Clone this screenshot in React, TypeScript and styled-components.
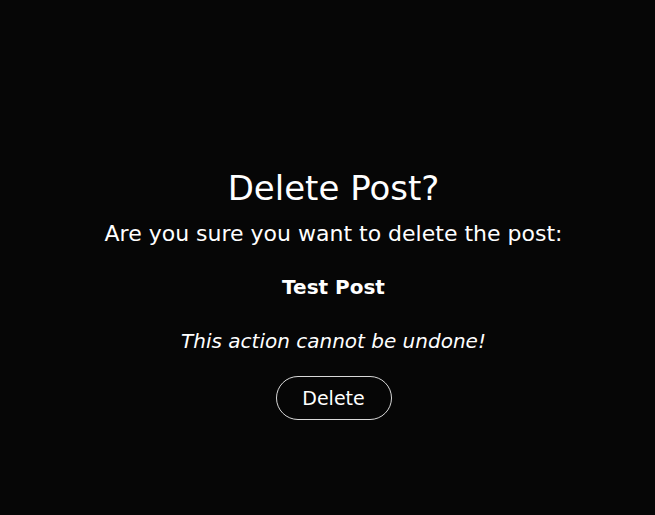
import styled, { createGlobalStyle } from 'styled-components';

const GlobalStyle = createGlobalStyle`
  html, body {
    margin: 0;
    padding: 0;
    background: #060606;
  }
  body {
    font-family: "DejaVu Sans", "Noto Sans", sans-serif;
    color: #ffffff;
  }
`;

const Page = styled.main`
  min-height: 515px;
  display: flex;
  flex-direction: column;
  align-items: center;
  padding: 165px 0 0 12px;
  box-sizing: border-box;
`;

const Title = styled.h1`
  margin: 0;
  font-size: 34px;
  font-weight: 400;
  line-height: 46px;
`;

const Question = styled.p`
  margin: 8px 0 0;
  font-size: 22px;
  line-height: 30px;
`;

const PostName = styled.p`
  margin: 23px 0 0;
  font-size: 20px;
  font-weight: 700;
  line-height: 30px;
`;

const Warning = styled.p`
  margin: 24px 0 0;
  font-size: 20px;
  font-style: italic;
  line-height: 30px;
`;

const DeleteButton = styled.button`
  margin-top: 20px;
  width: 116px;
  height: 44px;
  border: 1px solid #d8d8d8;
  border-radius: 22px;
  background: transparent;
  color: #ffffff;
  font-family: inherit;
  font-size: 19px;
  cursor: pointer;
`;

export default function App() {
  return (
    <>
      <GlobalStyle />
      <Page>
        <Title>Delete Post?</Title>
        <Question>Are you sure you want to delete the post:</Question>
        <PostName>Test Post</PostName>
        <Warning>This action cannot be undone!</Warning>
        <DeleteButton>Delete</DeleteButton>
      </Page>
    </>
  );
}
